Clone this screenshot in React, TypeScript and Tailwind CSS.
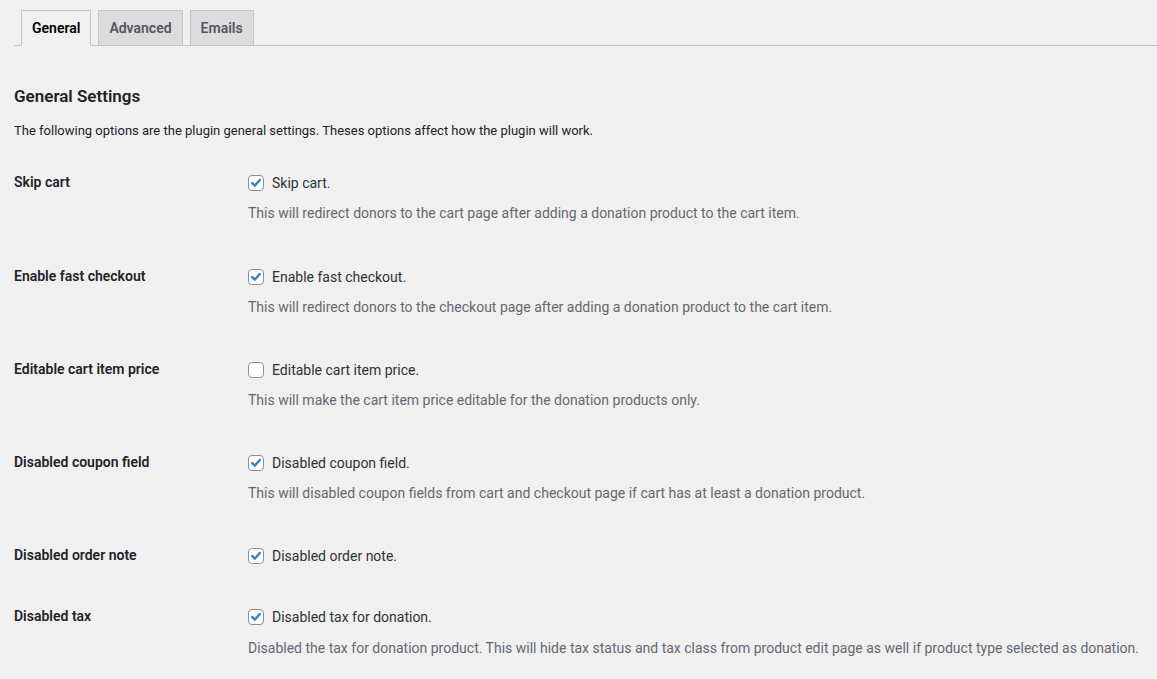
import React from "react";

type Row = { label: string; text: string; checked: boolean; desc?: string };

const rows: Row[] = [
  {
    label: "Skip cart",
    text: "Skip cart.",
    checked: true,
    desc: "This will redirect donors to the cart page after adding a donation product to the cart item.",
  },
  {
    label: "Enable fast checkout",
    text: "Enable fast checkout.",
    checked: true,
    desc: "This will redirect donors to the checkout page after adding a donation product to the cart item.",
  },
  {
    label: "Editable cart item price",
    text: "Editable cart item price.",
    checked: false,
    desc: "This will make the cart item price editable for the donation products only.",
  },
  {
    label: "Disabled coupon field",
    text: "Disabled coupon field.",
    checked: true,
    desc: "This will disabled coupon fields from cart and checkout page if cart has at least a donation product.",
  },
  {
    label: "Disabled order note",
    text: "Disabled order note.",
    checked: true,
  },
  {
    label: "Disabled tax",
    text: "Disabled tax for donation.",
    checked: true,
    desc: "Disabled the tax for donation product. This will hide tax status and tax class from product edit page as well if product type selected as donation.",
  },
];

function Checkbox({ checked }: { checked: boolean }) {
  return (
    <span className="flex h-4 w-4 shrink-0 items-center justify-center rounded-[4px] border border-[#8c8f94] bg-white">
      {checked && (
        <svg viewBox="0 0 16 16" className="h-4 w-4" fill="none">
          <path d="M3.7 8.1 L6.6 11 L12.3 4.6" stroke="#3582c4" strokeWidth="2.8" strokeLinecap="round" strokeLinejoin="round" />
        </svg>
      )}
    </span>
  );
}

const tabs = ["General", "Advanced", "Emails"];

export default function App() {
  return (
    <div className="min-h-screen bg-[#f0f0f1] text-[#1d2327] font-['Roboto',sans-serif]">
      <div className="pl-[14px]">
        <div className="flex border-b border-[#c3c4c7] pt-[10px]">
          {tabs.map((t, i) => (
            <div
              key={t}
              className={
                i === 0
                  ? "ml-[7px] -mb-px border border-[#c3c4c7] border-b-[#f0f0f1] bg-[#f0f0f1] px-[10px] py-[5px] text-[14px] font-semibold leading-[24px] text-black"
                  : "ml-[7px] -mb-px border border-[#c3c4c7] bg-[#dcdcde] px-[10px] py-[5px] text-[14px] font-semibold leading-[24px] text-[#50575e]"
              }
            >
              {t}
            </div>
          ))}
        </div>

        <h2 className="mt-[39px] text-[17px] font-semibold leading-[22px] text-[#1d2327]">General Settings</h2>
        <p className="mt-[14px] text-[13px] leading-[20px] text-[#1d2327]">
          The following options are the plugin general settings. Theses options affect how the plugin will work.
        </p>

        <div className="mt-[12px] flex flex-col">
          {rows.map((r, i) => (
            <div key={r.label} className={i === 0 ? "flex pt-[20px] pb-[24px]" : "flex pt-[20px] pb-[23px]"}>
              <div className="w-[234px] shrink-0 text-[14px] font-semibold leading-[18px] text-[#1d2327]">{r.label}</div>
              <div className="flex flex-col">
                <label className="flex h-[18px] items-center gap-[8px] pt-[2px] text-[14px] text-[#2c3338]">
                  <Checkbox checked={r.checked} />
                  <span>{r.text}</span>
                </label>
                {r.desc && (
                  <p className={i === 5 ? "mt-[13px] text-[14px] leading-[20px] text-[#646970]" : "mt-[12px] text-[14px] leading-[20px] text-[#646970]"}>
                    {r.desc}
                  </p>
                )}
              </div>
            </div>
          ))}
        </div>
      </div>
    </div>
  );
}
